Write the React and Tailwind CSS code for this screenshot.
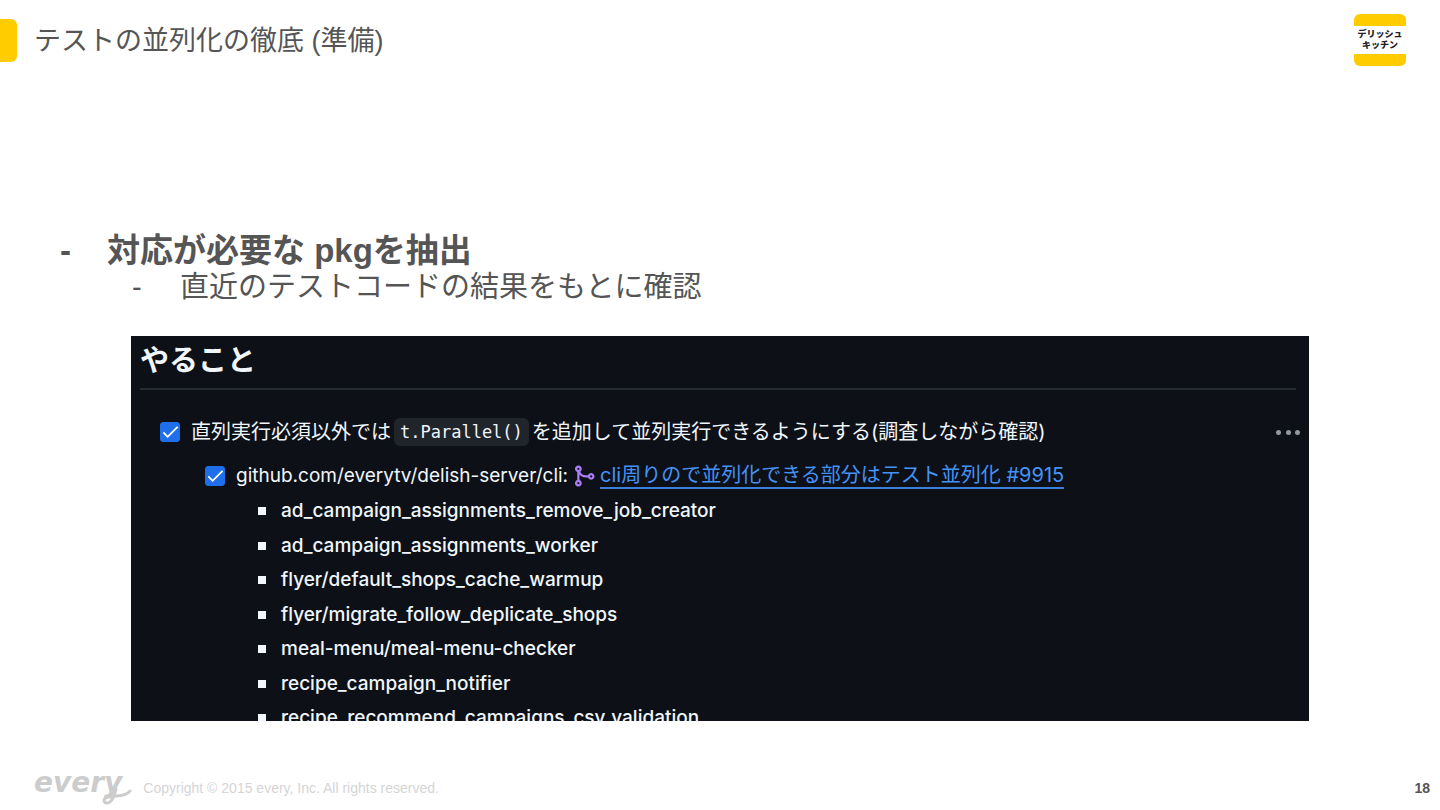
import React, { useState } from "react";

const packages = [
  "ad_campaign_assignments_remove_job_creator",
  "ad_campaign_assignments_worker",
  "flyer/default_shops_cache_warmup",
  "flyer/migrate_follow_deplicate_shops",
  "meal-menu/meal-menu-checker",
  "recipe_campaign_notifier",
  "recipe_recommend_campaigns_csv_validation",
];

function Checkbox({ id }) {
  const [checked, setChecked] = useState(true);

  return (
    <span className="grid h-5 w-5 shrink-0">
      <input
        type="checkbox"
        id={id}
        checked={checked}
        onChange={(e) => setChecked(e.target.checked)}
        className="col-start-1 row-start-1 h-5 w-5 appearance-none rounded-[3px] border border-[#3d444d] checked:border-[#1f6feb] checked:bg-[#1f6feb]"
      />
      {checked && (
        <svg
          viewBox="0 0 20 20"
          fill="none"
          stroke="white"
          strokeWidth="1.8"
          className="pointer-events-none col-start-1 row-start-1 h-5 w-5"
        >
          <path d="M3.4 10.4 7.6 14.8 17.6 4.8" />
        </svg>
      )}
    </span>
  );
}

function MergeIcon() {
  return (
    <svg viewBox="0 0 16 16" fill="#ab7df8" className="h-6 w-6 shrink-0">
      <path d="M5.45 5.154A4.25 4.25 0 0 0 9.25 7.5h1.378a2.251 2.251 0 1 1 0 1.5H9.25A5.734 5.734 0 0 1 5 7.123v3.505a2.25 2.25 0 1 1-1.5 0V5.372a2.25 2.25 0 1 1 1.95-.218ZM4.25 13.5a.75.75 0 1 0 0-1.5.75.75 0 0 0 0 1.5Zm8.5-4.5a.75.75 0 1 0 0-1.5.75.75 0 0 0 0 1.5ZM5 3.25a.75.75 0 1 0 0 .005V3.25Z" />
    </svg>
  );
}

function Header() {
  return (
    <header className="flex h-20 items-center pr-[34px]">
      <span className="h-[43px] w-[17px] rounded-r-md bg-[#ffcc00]" />
      <h1 className="ml-[17px] flex-1 pt-0.5 text-[27px] leading-8">
        テストの並列化の徹底 (準備)
      </h1>
      <div className="flex h-[52px] w-[52px] flex-col overflow-hidden rounded-md">
        <span className="h-3 bg-[#ffcc00]" />
        <span className="flex flex-1 flex-col items-center justify-center bg-white text-[9px] leading-[11px] font-black whitespace-nowrap text-[#222222]">
          <span>デリッシュ</span>
          <span>キッチン</span>
        </span>
        <span className="h-3 bg-[#ffcc00]" />
      </div>
    </header>
  );
}

function TodoPanel() {
  return (
    <section className="mx-[131px] mt-[31px] h-[385px] overflow-hidden bg-[#0d1117] pr-[13px] pl-[9px] font-['Inter','Noto_Sans_CJK_JP',sans-serif] text-xl leading-[30px] text-[#f0f6fc]">
      <h2 className="h-[54px] border-b-2 border-[#262b32] pt-1 text-[29px] leading-[42px] font-bold">
        やること
      </h2>

      <div className="mt-[27px] flex items-center pl-5">
        <Checkbox id="parallel" />
        <label
          htmlFor="parallel"
          className="ml-[11px] flex flex-1 items-center whitespace-nowrap"
        >
          直列実行必須以外では
          <code className="mx-[3px] rounded-md bg-[#20252c] px-1.5 py-0.5 font-['DejaVu_Sans_Mono',monospace] text-[17px] leading-6">
            t.Parallel()
          </code>
          を追加して並列実行できるようにする(調査しながら確認)
        </label>
        <button
          type="button"
          aria-label="メニュー"
          className="-mr-1 flex w-6 justify-between"
        >
          <span className="h-[5px] w-[5px] rounded-full bg-[#9198a1]" />
          <span className="h-[5px] w-[5px] rounded-full bg-[#9198a1]" />
          <span className="h-[5px] w-[5px] rounded-full bg-[#9198a1]" />
        </button>
      </div>

      <div className="mt-3.5 flex items-center pl-[65px] whitespace-nowrap">
        <Checkbox id="cli" />
        <label htmlFor="cli" className="ml-[11px] text-[19px]">
          github.com/everytv/delish-server/cli:
        </label>
        <span className="ml-1 flex items-center gap-1">
          <MergeIcon />
          <a
            href="#9915"
            className="border-b-2 border-[#3b7fdc] leading-6 text-[#4493f8]"
          >
            cli周りので並列化できる部分はテスト並列化 #9915
          </a>
        </span>
      </div>

      <ul className="mt-[5px] flex h-[237px] flex-col justify-between pl-[118px] text-[19px] font-medium">
        {packages.map((name) => (
          <li key={name} className="flex items-center gap-[15px]">
            <span className="h-2 w-2 bg-[#f0f6fc]" />
            {name}
          </li>
        ))}
      </ul>
    </section>
  );
}

function Footer() {
  return (
    <footer className="mt-auto flex h-[45px] items-center pr-[10px] pl-[34px] text-sm">
      <div className="flex items-center text-[#cccccc]">
        <span className="pb-2.5 font-['DejaVu_Sans',sans-serif] text-[28px] leading-8 font-bold italic">
          every
        </span>
        {/* looped tail of the wordmark */}
        <svg
          viewBox="0 0 30 20"
          fill="none"
          stroke="#cccccc"
          strokeWidth="3"
          strokeLinecap="round"
          className="mt-4 -ml-5 h-5 w-[30px]"
        >
          <path d="M14 3C12 12 9 17 5 17C1 17 1 12 6 11C14 9 24 11 28 5" />
        </svg>
      </div>
      <small className="ml-[11px] flex-1 text-sm text-[#d5d5d5]">
        Copyright © 2015 every, Inc. All rights reserved.
      </small>
      <span className="font-bold">18</span>
    </footer>
  );
}

export default function App() {
  return (
    <div className="flex min-h-screen flex-col bg-white font-['Liberation_Sans','Noto_Sans_CJK_JP',sans-serif] text-[#555555]">
      <Header />
      <main>
        <ul className="mt-[153px] pl-[60px]">
          <li>
            <div className="flex text-[33px] leading-9 font-bold">
              <span className="w-[47px]">-</span>
              対応が必要な pkgを抽出
            </div>
            <ul className="pl-[72px]">
              <li className="flex text-[29px] leading-9">
                <span className="w-12">-</span>
                直近のテストコードの結果をもとに確認
              </li>
            </ul>
          </li>
        </ul>
        <TodoPanel />
      </main>
      <Footer />
    </div>
  );
}
